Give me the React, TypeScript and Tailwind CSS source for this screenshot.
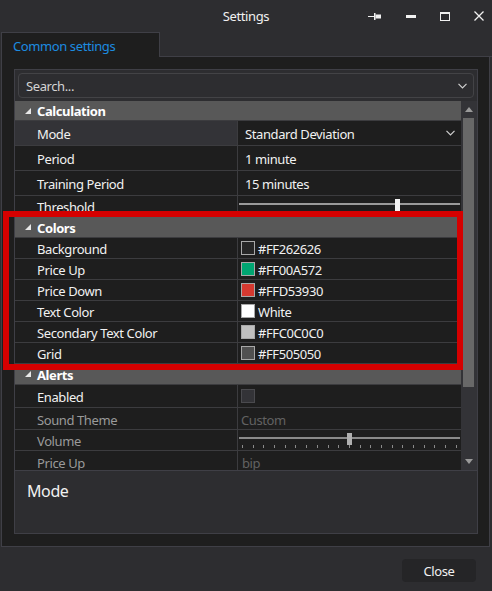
import type { ReactNode } from "react";

type RowProps = {
  label: string;
  h: string;
  selected?: boolean;
  dim?: boolean;
  children?: ReactNode;
};

function Row({ label, h, selected, dim, children }: RowProps) {
  return (
    <div className={`flex ${h} border-b border-[#3c3c3f]`}>
      <div
        className={`flex w-[223px] shrink-0 items-center border-r border-[#3c3c3f] pl-[22px] pt-[4px] ${
          selected ? "bg-[#333337]" : ""
        } ${dim ? "text-[#9a9a9a]" : "text-[#f1f1f1]"}`}
      >
        {label}
      </div>
      <div className="flex min-w-0 flex-1 items-center">{children}</div>
    </div>
  );
}

function Category({ title, h }: { title: string; h: string }) {
  return (
    <div className={`flex ${h} items-center border-b border-[#3c3c3f] bg-[#585858] pl-[10px]`}>
      <svg width="6" height="6" viewBox="0 0 6 6" className="mr-[6px]">
        <polygon points="6,0 6,6 0,6" fill="#e8e8e8" />
      </svg>
      <span className="pt-[3px] font-bold text-white">{title}</span>
    </div>
  );
}

function Swatch({ color, text }: { color: string; text: string }) {
  return (
    <div className="flex items-center pl-[3px]">
      <div
        className="h-[14px] w-[14px] border border-[#a8a8a8]"
        style={{ backgroundColor: color }}
      />
      <span className="ml-[3px] pt-[4px] text-[#f1f1f1]">{text}</span>
    </div>
  );
}

function Chevron({ className }: { className?: string }) {
  return (
    <svg width="9" height="6" viewBox="0 0 9 6" className={className}>
      <polyline points="0.5,0.8 4.5,4.8 8.5,0.8" fill="none" stroke="#d0d0d0" strokeWidth="1.2" />
    </svg>
  );
}

const ticks = Array.from({ length: 21 }, (_, i) => i);

export default function App() {
  return (
    <div className="relative flex h-[591px] w-[492px] flex-col overflow-hidden bg-[#2d2d30] font-['Noto_Sans',sans-serif] text-[13px] tracking-[-0.4px] text-[#f1f1f1]">
      {/* title bar */}
      <div className="grid h-[32px] shrink-0 grid-cols-[1fr_auto_1fr] items-center">
        <div />
        <div className="pt-[2px] text-[13px] text-[#f1f1f1]">Settings</div>
        <div className="flex items-center justify-end gap-[24px] pr-[8px]">
          <svg width="13" height="7" viewBox="0 0 13 7" className="mr-[1px]">
            <rect x="0" y="3" width="6" height="1" fill="#f1f1f1" />
            <rect x="6" y="0" width="1.5" height="7" fill="#f1f1f1" />
            <rect x="7.5" y="1.5" width="5.5" height="4" fill="#f1f1f1" />
          </svg>
          <svg width="10" height="3" viewBox="0 0 10 3">
            <rect x="0" y="0" width="10" height="3" fill="#f1f1f1" />
          </svg>
          <svg width="10" height="9" viewBox="0 0 10 9">
            <rect x="0.5" y="1" width="9" height="7.5" fill="none" stroke="#f1f1f1" strokeWidth="1" />
            <rect x="0" y="0" width="10" height="2" fill="#f1f1f1" />
          </svg>
          <svg width="10" height="10" viewBox="0 0 10 10">
            <path d="M0.5 0.5L9.5 9.5M9.5 0.5L0.5 9.5" stroke="#f1f1f1" strokeWidth="1.3" />
          </svg>
        </div>
      </div>

      {/* tab strip */}
      <div className="flex h-[25px] shrink-0">
        <div className="ml-[1px] flex w-[159px] items-center border-x border-t border-[#3f3f46] bg-[#1e1e1e] pl-[11px] pt-[3px] text-[#1c8ce0]">
          Common settings
        </div>
        <div className="flex-1 border-b border-[#3f3f46]" />
      </div>

      {/* tab panel */}
      <div className="ml-[1px] flex h-[490px] w-[489px] shrink-0 flex-col border-x border-b border-[#3f3f46] bg-[#1e1e1e] pb-[12px] pl-[12px] pr-[11px] pt-[12px]">
        <div className="flex h-[465px] flex-col border border-[#3f3f46]">
          {/* search */}
          <div className="flex h-[31px] shrink-0 items-center bg-[#2d2d30] px-[3px]">
            <div className="flex h-[25px] flex-1 items-center justify-between rounded-[4px] border border-[#434346] bg-[#2d2d30] pl-[7px] pr-[6px]">
              <span className="pt-[3px] text-[#d4d4d4]">Search...</span>
              <Chevron />
            </div>
          </div>

          {/* property grid */}
          <div className="flex h-[369px] shrink-0">
            <div className="w-[446px] overflow-hidden">
              <Category title="Calculation" h="h-[20px]" />
              <Row label="Mode" h="h-[25px]" selected>
                <div className="flex flex-1 items-center justify-between pl-[7px] pr-[6px]">
                  <span className="pt-[4px]">Standard Deviation</span>
                  <Chevron />
                </div>
              </Row>
              <Row label="Period" h="h-[25px]">
                <span className="pl-[7px] pt-[4px]">1 minute</span>
              </Row>
              <Row label="Training Period" h="h-[25px]">
                <span className="pl-[7px] pt-[4px]">15 minutes</span>
              </Row>
              <Row label="Threshold" h="h-[21px]">
                <div className="relative flex h-full flex-1 items-start pl-[1px] pr-[1px] pt-[7px]">
                  <div className="h-[2px] flex-1 bg-[#9a9a9a]" />
                  <div className="absolute left-[157px] top-[3px] h-[14px] w-[5px] bg-[#f4f4f4]" />
                </div>
              </Row>
              <Category title="Colors" h="h-[21px]" />
              <Row label="Background" h="h-[21px]">
                <Swatch color="#262626" text="#FF262626" />
              </Row>
              <Row label="Price Up" h="h-[21px]">
                <Swatch color="#00A572" text="#FF00A572" />
              </Row>
              <Row label="Price Down" h="h-[21px]">
                <Swatch color="#D53930" text="#FFD53930" />
              </Row>
              <Row label="Text Color" h="h-[21px]">
                <Swatch color="#FFFFFF" text="White" />
              </Row>
              <Row label="Secondary Text Color" h="h-[21px]">
                <Swatch color="#C0C0C0" text="#FFC0C0C0" />
              </Row>
              <Row label="Grid" h="h-[21px]">
                <Swatch color="#505050" text="#FF505050" />
              </Row>
              <Category title="Alerts" h="h-[21px]" />
              <Row label="Enabled" h="h-[23px]">
                <div className="ml-[3px] h-[14px] w-[14px] border border-[#4a4a4e] bg-[#333337]" />
              </Row>
              <Row label="Sound Theme" h="h-[22px]" dim>
                <span className="pl-[3px] pt-[4px] text-[#626262]">Custom</span>
              </Row>
              <Row label="Volume" h="h-[21px]" dim>
                <div className="relative flex h-full flex-1 flex-col px-[1px] pt-[7px]">
                  <div className="h-[2px] bg-[#8a8a8a]" />
                  <div className="mt-[6px] flex justify-between px-[3px]">
                    {ticks.map((t) => (
                      <div key={t} className="h-[3px] w-[1px] bg-[#8a8a8a]" />
                    ))}
                  </div>
                  <div className="absolute left-[109px] top-[3px] h-[12px] w-[5px] bg-[#b0b0b0]" />
                </div>
              </Row>
              <Row label="Price Up" h="h-[22px]" dim>
                <span className="pl-[4px] pt-[4px] text-[#626262]">bip</span>
              </Row>
            </div>
            {/* scrollbar */}
            <div className="flex w-[16px] flex-col bg-[#333337]">
              <div className="flex h-[17px] items-center justify-center">
                <svg width="8" height="5" viewBox="0 0 8 5">
                  <polygon points="0,5 4,0 8,5" fill="#9a9a9a" />
                </svg>
              </div>
              <div className="ml-[2px] h-[269px] w-[11px] bg-[#686868]" />
              <div className="flex flex-1 items-end justify-center pb-[6px]">
                <svg width="8" height="5" viewBox="0 0 8 5">
                  <polygon points="0,0 8,0 4,5" fill="#9a9a9a" />
                </svg>
              </div>
            </div>
          </div>

          {/* description */}
          <div className="flex-1 border-t border-[#3f3f46] bg-[#2d2d30] pl-[12px] pt-[8px]">
            <span className="text-[16px] text-[#f1f1f1]">Mode</span>
          </div>
        </div>
      </div>

      {/* footer */}
      <div className="flex flex-1 items-start justify-end pr-[16px] pt-[12px]">
        <div className="flex h-[23px] w-[74px] items-center justify-center rounded-[4px] bg-[#252527] pt-[3px] text-[#f1f1f1]">
          Close
        </div>
      </div>

      {/* annotation frame */}
      <div className="pointer-events-none absolute left-[3px] top-[211px] h-[159px] w-[460px] border-[6px] border-[#d50000]" />
    </div>
  );
}
